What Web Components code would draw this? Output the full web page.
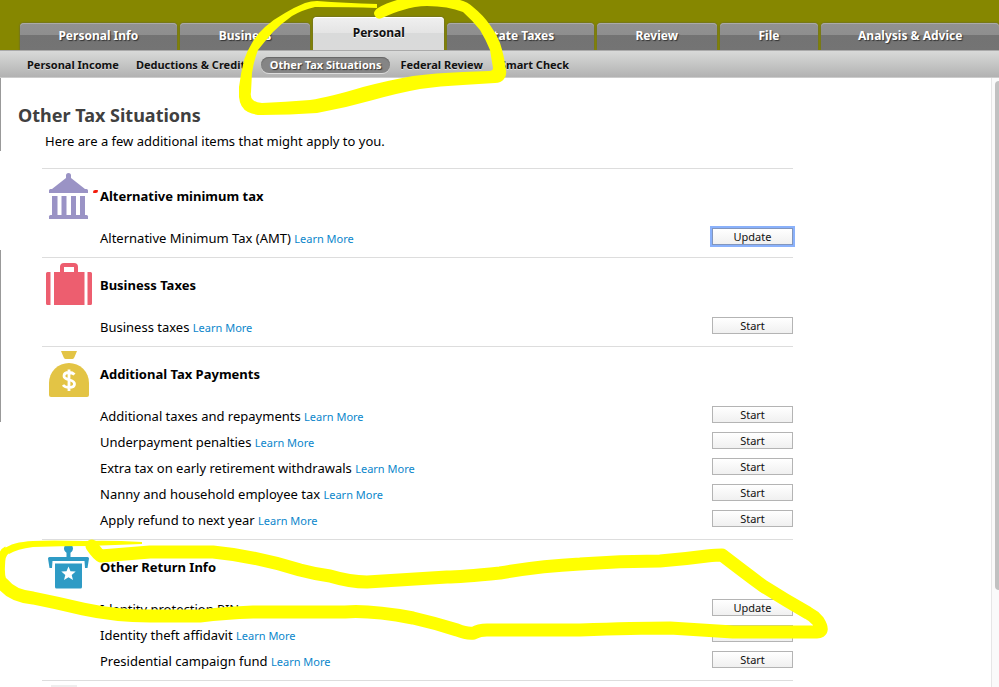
<!DOCTYPE html>
<html lang="en">
<head>
<meta charset="utf-8">
<title>Other Tax Situations</title>
<style>
  html, body { height: 100%; }
  body {
    margin: 0;
    overflow: hidden;
    background: #fff;
    color: #000;
    font-family: "Noto Sans", "Open Sans", sans-serif;
    font-size: 13px;
  }
</style>
</head>
<body>
<tax-app>
  <tab-bar slot="tabs">
    <tab-item style="--weight: 157">Personal Info</tab-item>
    <tab-item style="--weight: 131">Business</tab-item>
    <tab-item style="--weight: 131" current>Personal</tab-item>
    <tab-item style="--weight: 147">State Taxes</tab-item>
    <tab-item style="--weight: 120">Review</tab-item>
    <tab-item style="--weight: 99">File</tab-item>
    <tab-item style="--weight: 178">Analysis &amp; Advice</tab-item>
  </tab-bar>
  <sub-nav slot="subnav">
    <sub-item>Personal Income</sub-item>
    <sub-item>Deductions &amp; Credits</sub-item>
    <sub-item current>Other Tax Situations</sub-item>
    <sub-item>Federal Review</sub-item>
    <sub-item>Smart Check</sub-item>
  </sub-nav>

  <page-heading heading="Other Tax Situations">Here are a few additional items that might apply to you.</page-heading>
  <topic-section heading="Alternative minimum tax" icon="bank" flagged>
    <topic-row action="Update" active>Alternative Minimum Tax (AMT)</topic-row>
  </topic-section>
  <topic-section heading="Business Taxes" icon="case">
    <topic-row action="Start">Business taxes</topic-row>
  </topic-section>
  <topic-section heading="Additional Tax Payments" icon="bag">
    <topic-row action="Start">Additional taxes and repayments</topic-row>
    <topic-row action="Start">Underpayment penalties</topic-row>
    <topic-row action="Start">Extra tax on early retirement withdrawals</topic-row>
    <topic-row action="Start">Nanny and household employee tax</topic-row>
    <topic-row action="Start">Apply refund to next year</topic-row>
  </topic-section>
  <topic-section heading="Other Return Info" icon="podium">
    <topic-row action="Update">Identity protection PIN</topic-row>
    <topic-row action="Start">Identity theft affidavit</topic-row>
    <topic-row action="Start">Presidential campaign fund</topic-row>
  </topic-section>
  <topic-section icon="page"></topic-section>

  <marker-ink slot="ink"></marker-ink>
</tax-app>

<script>
const icons = {
  bank: `<g fill="#9a93c5">
    <path d="M20 5V2.500a2.500 2.500 0 0 1 5 0V5l14 11h1.500q1.500 0 1.500 1.500V20H3v-2.500Q3 16 4.500 16H6z"/>
    <path d="M6 23h5.500v19H6zM15.500 23h5v19h-5zM25 23h5v19h-5zM34 23h5v19h-5z"/>
    <path d="M3 46v-2.500Q3 42 4.500 42h36q1.500 0 1.500 1.500V46z"/></g>`,
  case: `<g fill="#ed5e6f">
    <path fill-rule="evenodd" d="M8 10h6V5q0-4 4-4h10q4 0 4 4v5h6.500v33H8zM18 10h10V5H18z"/>
    <path d="M1.500 10H4.500v33H1.500Q0 43 0 41.500v-30Q0 10 1.500 10zM41.500 10h3q1.500 0 1.500 1.500v30q0 1.500-1.500 1.500h-3z"/></g>`,
  bag: `<g fill="#e3c445">
    <path d="M15 0h16l-2.500 6q-.7 2-2 2h-7q-1.300 0-2-2z"/>
    <path d="M3 32a20 20 0 0 1 40 0v12q0 2-2 2H5q-2 0-2-2z"/></g>
    <path d="M28.500 23.500q-2-2-5.500-2-5 0-5 3.500c0 5 10.500 2.500 10.500 8q0 3.500-5.500 3.500-4 0-6-2.500M23 18.500v21.500" fill="none" stroke="#fff" stroke-width="2.800"/>`,
  podium: `<g fill="#2e9bc5">
    <circle cx="22.500" cy="4.500" r="4.500"/>
    <path d="M20.500 8h4v5H41.500q1.500 0 1.500 1.500L41.500 24H39l-.5-7H6.500L6 24H3.500L2 14.500Q2 13 3.500 13h17z"/>
    <path d="M9 19.500h27V43q0 1.500-1.500 1.500h-24Q9 44.500 9 43z"/></g>
    <path fill="#fff" d="M22.500 22.500l2 4.800 5.200.3-4 3.400 1.300 5-4.500-2.800-4.500 2.800 1.300-5-4-3.400 5.200-.3z"/>`,
  page: `<path fill="#eee" d="M5 0h26v40H5z"/>`
};

class TaxApp extends HTMLElement {
  constructor() {
    super();
    this.attachShadow({ mode: "open" }).innerHTML = `
      <style>
        :host {
          display: flex;
          flex-direction: column;
          position: relative;
          height: 100vh;
          overflow: hidden;
        }
        .body { display: flex; flex: 1; min-height: 0; }
        main {
          flex: 1;
          min-width: 0;
          overflow: hidden;
          background:
            linear-gradient(#999, #999) 0 0 / 1px 73px no-repeat,
            linear-gradient(#999, #999) 0 172px / 1px 172px no-repeat;
        }
        .track {
          box-sizing: border-box;
          width: 8px;
          padding: 3px 0 0 3px;
          overflow: hidden;
          background: #fafafa;
          border-left: 1px solid #e6e6e6;
        }
        .thumb { width: 8px; height: 84%; border-radius: 4px; background: #c1c1c1; }
      </style>
      <header><slot name="tabs"></slot></header>
      <slot name="subnav"></slot>
      <div class="body">
        <main><slot></slot></main>
        <div class="track"><div class="thumb"></div></div>
      </div>
      <slot name="ink"></slot>`;
  }
}

class TabBar extends HTMLElement {
  constructor() {
    super();
    this.attachShadow({ mode: "open" }).innerHTML = `
      <style>
        :host { display: block; background: #868700; }
        nav {
          display: flex;
          align-items: flex-end;
          gap: 3px;
          height: 50px;
          padding-left: 20px;
        }
      </style>
      <nav><slot></slot></nav>`;
  }
}

class TabItem extends HTMLElement {
  constructor() {
    super();
    this.attachShadow({ mode: "open" }).innerHTML = `
      <style>
        :host { flex: var(--weight) 1 0; display: block; min-width: 0; }
        a {
          display: block;
          height: 27px;
          line-height: 25px;
          border-radius: 4px 4px 0 0;
          background: linear-gradient(#929292, #8e8e8e 12px, #737373 12px, #747474);
          box-shadow: inset 0 1px #aaa, 0 0 2px #555;
          color: #fff;
          font-size: 12px;
          font-weight: 700;
          text-align: center;
          text-decoration: none;
          text-shadow: 1px 1px 1px #333;
          white-space: nowrap;
        }
        :host([current]) a {
          height: 33px;
          line-height: 31px;
          background: linear-gradient(#f0f0f0, #e4e4e4 16px, #d9dada 16px, #dadada);
          box-shadow: inset 0 1px #fff, 0 0 2px #555;
          color: #111;
          text-shadow: 0 1px #fff;
        }
      </style>
      <a href="#"><slot></slot></a>`;
  }
}

class SubNav extends HTMLElement {
  constructor() {
    super();
    this.attachShadow({ mode: "open" }).innerHTML = `
      <style>
        :host { display: block; position: relative; }
        nav {
          box-sizing: border-box;
          display: flex;
          align-items: center;
          gap: 3px;
          height: 28px;
          padding: 2px 20px 0;
          background: linear-gradient(#d9dad9, #b2b2b2);
          border-top: 1px solid #aaa;
          border-bottom: 1px solid #ccc;
        }
      </style>
      <nav><slot></slot></nav>`;
  }
}

class SubItem extends HTMLElement {
  constructor() {
    super();
    this.attachShadow({ mode: "open" }).innerHTML = `
      <style>
        :host { display: block; }
        a {
          display: block;
          padding: 0 7px;
          border-radius: 8px;
          color: #111;
          font-size: 11px;
          font-weight: 700;
          line-height: 16px;
          text-decoration: none;
          text-shadow: 0 1px #ddd;
          white-space: nowrap;
        }
        :host([current]) a {
          padding: 0 9px;
          background: #858585;
          box-shadow: inset 0 1px 1px #666, 0 1px #ddd;
          color: #fff;
          text-shadow: 1px 1px 1px #333;
        }
      </style>
      <a href="#"><slot></slot></a>`;
  }
}

class PageHeading extends HTMLElement {
  constructor() {
    super();
    this.attachShadow({ mode: "open" }).innerHTML = `
      <style>
        :host { display: block; padding: 25px 18px 16px; }
        h1 { margin: 0; color: #404040; font-size: 18px; line-height: 24px; }
        p { margin: 3px 0 0 27px; line-height: 22px; }
      </style>
      <h1>${this.getAttribute("heading")}</h1>
      <p><slot></slot></p>`;
  }
}

class TopicSection extends HTMLElement {
  constructor() {
    super();
    const heading = this.getAttribute("heading");
    this.attachShadow({ mode: "open" }).innerHTML = `
      <style>
        :host { display: block; max-width: 751px; margin-left: 42px; }
        section {
          display: flex;
          gap: 8px;
          padding: 4px 0 6px;
          border-top: 1px solid #ddd;
        }
        svg { flex: none; margin-left: 4px; overflow: visible; }
        .text { flex: 1; }
        h2 {
          margin: 0 0 16px;
          padding-top: 10px;
          font-size: 13px;
          line-height: 26px;
        }
        :host([flagged]) h2::before {
          content: "";
          position: absolute;
          width: 5px;
          height: 3px;
          margin: 7px 0 0 -7px;
          border-radius: 3px 1px 3px 1px;
          background: #f31b0c;
        }
      </style>
      <section>
        <svg width="46" height="46" viewBox="0 0 46 46" aria-hidden="true">${icons[this.getAttribute("icon")]}</svg>
        <div class="text">
          ${heading ? `<h2>${heading}</h2>` : ""}
          <slot></slot>
        </div>
      </section>`;
  }
}

class TopicRow extends HTMLElement {
  constructor() {
    super();
    this.attachShadow({ mode: "open" }).innerHTML = `
      <style>
        :host {
          display: flex;
          align-items: flex-start;
          justify-content: space-between;
          height: 26px;
          line-height: 26px;
          white-space: nowrap;
        }
        a { color: #0a86cb; font-size: 11px; text-decoration: none; }
        button {
          box-sizing: border-box;
          width: 81px;
          height: 17px;
          margin: 3px 0 0;
          padding: 0;
          border: 1px solid #b4b4b4;
          background: linear-gradient(#fff, #f0f0f0);
          color: #111;
          font-family: inherit;
          font-size: 11px;
          line-height: 15px;
        }
        :host([active]) button {
          border-color: #8296bd;
          box-shadow: 0 0 0 2px #8ab1fb;
        }
      </style>
      <span><span id="topic"><slot></slot></span> <a href="#" aria-describedby="topic">Learn More</a></span>
      <button type="button" aria-describedby="topic">${this.getAttribute("action")}</button>`;
  }
}

// freehand highlighter drawn over the whole page
class MarkerInk extends HTMLElement {
  constructor() {
    super();
    this.attachShadow({ mode: "open" }).innerHTML = `
      <style>
        :host { display: block; position: absolute; inset: 0; z-index: 5; pointer-events: none; }
        svg { display: block; width: 100%; height: 100%; }
      </style>
      <svg viewBox="0 0 999 687" preserveAspectRatio="none" fill="#ff0" aria-hidden="true">
        <path d="M377 4Q345 3 317 1Q311 1 305 3Q295 7 285 13Q274 19 265 27Q257 34 252 43Q247 51 244 60Q241 72 239 87V97Q240 108 248 112Q254 115 262 115Q290 115 317 113Q345 108 373 100Q398 93 420 89Q440 86 463 85L495 83Q501 83 504 79Q507 75 506 70Q504 55 500 43Q496 33 490 25Q483 15 473 7Q468 2 460 0H397Q386 3 378 8Q372 12 375 16Q377 20 382 18Q395 12 403 10Q415 6 427 6Q448 6 463 12Q472 20 480 30Q486 40 490 50L493 68Q493 71 489 71L463 72Q435 73 413 76Q390 80 363 87Q330 97 310 100Q285 102 262 103Q256 103 253 100Q250 97 251 92L252 73Q254 60 258 50Q265 41 273 32Q282 23 292 16Q302 10 315 7Q350 7 377 8Z"/>
        <path d="M142 542Q110 540 84 541Q50 540 33 541Q12 542 4 549L9 554Q17 549 33 547Q60 546 88 546Q115 545 142 544Z"/>
        <path fill="none" stroke="#ff0" stroke-width="8" d="M7 550Q1 553 1 566Q0 581 7 588"/>
        <path fill="none" stroke="#ff0" stroke-width="13" stroke-linejoin="round" stroke-linecap="round" d="M3 584Q12 596 33 598Q58 603 83 609Q115 616 150 616Q180 616 200 616Q225 613 253 612H345Q370 610 413 618Q435 623 457 630Q467 634 474 633Q479 630 487 630Q530 630 580 630Q635 628 670 628Q700 630 733 632H817Q825 632 818 621Q814 616 808 613Q785 600 763 586Q744 572 722 555Q717 555 707 556Q685 559 660 561Q620 561 580 564Q540 566 500 573Q460 577 447 577L367 582Q350 582 330 576Q315 574 300 570Q255 556 213 552H150Q125 554 101 556Q98 555 92 546"/>
      </svg>`;
  }
}

customElements.define("tax-app", TaxApp);
customElements.define("tab-bar", TabBar);
customElements.define("tab-item", TabItem);
customElements.define("sub-nav", SubNav);
customElements.define("sub-item", SubItem);
customElements.define("page-heading", PageHeading);
customElements.define("topic-section", TopicSection);
customElements.define("topic-row", TopicRow);
customElements.define("marker-ink", MarkerInk);
</script>
</body>
</html>
